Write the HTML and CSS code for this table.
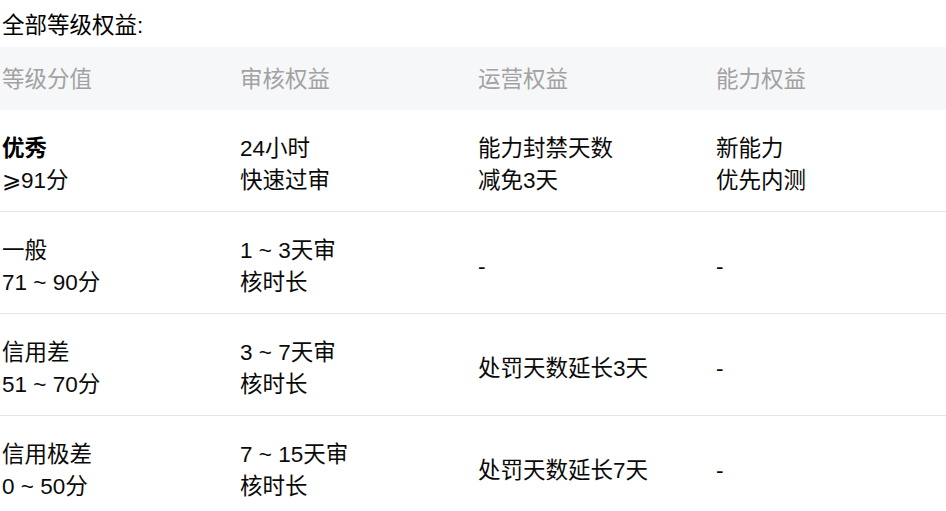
FILE: index.html
```html
<!DOCTYPE html>
<html lang="zh-CN">
<head>
<meta charset="utf-8">
<title>全部等级权益</title>
<link rel="stylesheet" href="styles.css">
</head>
<body>
<div class="page">
  <p class="title">全部等级权益:</p>
  <table class="rights">
    <colgroup>
      <col class="c1"><col class="c2"><col class="c3"><col class="c4">
    </colgroup>
    <thead>
      <tr>
        <th>等级分值</th>
        <th>审核权益</th>
        <th>运营权益</th>
        <th>能力权益</th>
      </tr>
    </thead>
    <tbody>
      <tr>
        <td><strong>优秀</strong><br>⩾91分</td>
        <td>24小时<br>快速过审</td>
        <td>能力封禁天数<br>减免3天</td>
        <td>新能力<br>优先内测</td>
      </tr>
      <tr>
        <td>一般<br>71 ~ 90分</td>
        <td>1 ~ 3天审<br>核时长</td>
        <td>-</td>
        <td>-</td>
      </tr>
      <tr>
        <td>信用差<br>51 ~ 70分</td>
        <td>3 ~ 7天审<br>核时长</td>
        <td>处罚天数延长3天</td>
        <td>-</td>
      </tr>
      <tr>
        <td>信用极差<br>0 ~ 50分</td>
        <td>7 ~ 15天审<br>核时长</td>
        <td>处罚天数延长7天</td>
        <td>-</td>
      </tr>
    </tbody>
  </table>
</div>
</body>
</html>
```

FILE: styles.css
```css
html, body {
  margin: 0;
  padding: 0;
  background: #ffffff;
}

body {
  font-family: "Liberation Sans", "Noto Sans CJK SC", sans-serif;
  font-size: 22.5px;
  line-height: 31.5px;
  color: #0a0a0a;
  overflow: hidden;
}

.page {
  width: 946px;
}

.title {
  margin: 10px 0 5px;
  padding-left: 2px;
  color: #000000;
}

.rights {
  width: 946px;
  border-collapse: collapse;
  table-layout: fixed;
}

.c1, .c2, .c3 { width: 238px; }
.c4 { width: 232px; }

.rights th {
  background: #f6f7f9;
  color: #a2a2a2;
  font-weight: normal;
  text-align: left;
  padding: 17px 0 14.5px 2px;
}

.rights td {
  padding: 23.5px 0 14.5px 2px;
  border-bottom: 1px solid #e6e6e6;
  vertical-align: middle;
  color: #0a0a0a;
}

.rights strong {
  font-weight: bold;
  color: #000000;
}
```
